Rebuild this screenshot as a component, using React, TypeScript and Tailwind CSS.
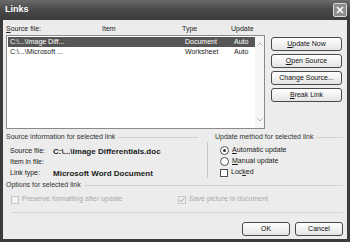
import React from "react";

const rows = [
  { file: "C:\\...\\Image Diff...", item: "", type: "Document", update: "Auto", selected: true },
  { file: "C:\\...\\Microsoft ...", item: "", type: "Worksheet", update: "Auto", selected: false },
];

function Btn({ children, className = "" }: { children: React.ReactNode; className?: string }) {
  return (
    <div
      className={`h-[14px] flex items-center justify-center rounded-[3px] border border-[#4a4a4a] bg-gradient-to-b from-white to-[#e4e4e4] text-[7px] text-[#111] ${className}`}
    >
      {children}
    </div>
  );
}

function Check({ checked = false, disabled = false }: { checked?: boolean; disabled?: boolean }) {
  return (
    <div
      className={`w-[8px] h-[8px] border flex items-center justify-center shrink-0 ${
        disabled ? "border-[#c4c4c4] bg-[#f2f2f2]" : "border-[#4d4d4d] bg-white"
      }`}
    >
      {checked && (
        <svg width="6" height="6" viewBox="0 0 6 6">
          <path d="M0.8 3 L2.3 4.5 L5.2 1.2" stroke={disabled ? "#bdbdbd" : "#333"} strokeWidth="1.2" fill="none" />
        </svg>
      )}
    </div>
  );
}

function Radio({ on = false }: { on?: boolean }) {
  return (
    <div className="w-[9px] h-[9px] rounded-full border border-[#4d4d4d] bg-white flex items-center justify-center shrink-0">
      {on && <div className="w-[3px] h-[3px] rounded-full bg-[#333]" />}
    </div>
  );
}

export default function App() {
  return (
    <div
      className="w-[350px] h-[242px] bg-[#3b3b3b] flex flex-col overflow-hidden text-[#1a1a1a]"
      style={{ fontFamily: '"Liberation Sans", Arial, sans-serif' }}
    >
      {/* Title bar */}
      <div className="h-[20px] flex items-center justify-between pl-[5px] pr-[3px] bg-gradient-to-b from-[#6a6a6a] via-[#484848] to-[#3b3b3b]">
        <span className="text-white text-[9px] font-bold">Links</span>
        <div className="w-[14px] h-[14px] rounded-[2px] border border-[#d8d8d8] bg-[#8c8c8c] flex items-center justify-center">
          <svg width="8" height="8" viewBox="0 0 8 8">
            <path d="M1 1 L7 7 M7 1 L1 7" stroke="white" strokeWidth="1.6" />
          </svg>
        </div>
      </div>

      {/* Body */}
      <div className="flex-1 mx-[3px] mb-[3px] bg-[#ececec] pl-[3px] pr-[4px] pt-[4px] flex flex-col text-[7px]">
        <div className="flex gap-[6px]">
          <div className="w-[259px] flex flex-col">
            <div className="h-[11px] grid grid-cols-[96px_80px_49px_1fr] items-center text-[#222]">
              <span><u>S</u>ource file:</span>
              <span>Item</span>
              <span>Type</span>
              <span>Update</span>
            </div>
            <div className="h-[94px] border border-[#8a8a8a] bg-white flex">
              <div className="flex-1 pt-[1px] pl-[1px]">
                {rows.map((r, i) => (
                  <div
                    key={i}
                    className={`h-[10px] grid grid-cols-[95px_80px_49px_1fr] items-center pl-[2px] ${
                      r.selected ? "bg-[#565656] text-white" : "text-[#1a1a1a]"
                    }`}
                  >
                    <span>{r.file}</span>
                    <span>{r.item}</span>
                    <span>{r.type}</span>
                    <span>{r.update}</span>
                  </div>
                ))}
              </div>
              <div className="w-[9px] bg-[#f6f6f6] flex flex-col justify-between items-center py-[6px]">
                <svg width="6" height="4" viewBox="0 0 6 4">
                  <path d="M0.5 3.5 L3 1 L5.5 3.5" stroke="#b5b5b5" strokeWidth="1" fill="none" />
                </svg>
                <svg width="6" height="4" viewBox="0 0 6 4">
                  <path d="M0.5 0.5 L3 3 L5.5 0.5" stroke="#b5b5b5" strokeWidth="1" fill="none" />
                </svg>
              </div>
            </div>
          </div>
          <div className="w-[71px] pt-[13px] flex flex-col gap-[3px]">
            <Btn><u>U</u>pdate Now</Btn>
            <Btn><u>O</u>pen Source</Btn>
            <Btn>Chan<u>g</u>e Source...</Btn>
            <Btn><u>B</u>reak Link</Btn>
          </div>
        </div>

        {/* Source info + update method */}
        <div className="mt-[3px] flex">
          <div className="w-[201px] flex flex-col">
            <div className="h-[10px] flex items-center gap-[3px] pr-[9px] text-[#333]">
              <span className="whitespace-nowrap">Source information for selected link</span>
              <div className="flex-1 h-px bg-[#d2d2d2]" />
            </div>
            <div className="mt-[4px] pl-[4px] flex flex-col">
              <div className="h-[11px] flex items-center">
                <span className="w-[43px]">Source file:</span>
                <span className="font-bold text-[8px] whitespace-nowrap">C:\...\Image Differentials.doc</span>
              </div>
              <div className="h-[11px] flex items-center">
                <span className="w-[43px]">Item in file:</span>
              </div>
              <div className="h-[11px] flex items-center">
                <span className="w-[43px]">Link type:</span>
                <span className="font-bold text-[8px] whitespace-nowrap">Microsoft Word Document</span>
              </div>
            </div>
          </div>
          <div className="flex-1 flex flex-col">
            <div className="h-[10px] flex items-center gap-[3px] pl-[8px] text-[#333]">
              <span className="whitespace-nowrap">Update method for selected link</span>
              <div className="flex-1 h-px bg-[#d2d2d2]" />
            </div>
            <div className="border-l border-[#c6c6c6] pl-[12px] pt-[3px] flex flex-col">
              <div className="h-[11px] flex items-center gap-[3px]">
                <Radio on />
                <span><u>A</u>utomatic update</span>
              </div>
              <div className="h-[11px] flex items-center gap-[3px]">
                <Radio />
                <span><u>M</u>anual update</span>
              </div>
              <div className="h-[11px] flex items-center gap-[3px]">
                <Check />
                <span>Loc<u>k</u>ed</span>
              </div>
            </div>
          </div>
        </div>

        {/* Options */}
        <div className="mt-[1px] h-[10px] flex items-center gap-[3px] text-[#333]">
          <span className="whitespace-nowrap">Options for selected link</span>
          <div className="flex-1 h-px bg-[#d2d2d2]" />
        </div>
        <div className="mt-[4px] h-[11px] grid grid-cols-[172px_1fr] items-center text-[#a9a9a9]">
          <div className="pl-[5px] flex items-center gap-[3px]">
            <Check disabled />
            <span>Preserve formatting after update</span>
          </div>
          <div className="flex items-center gap-[3px]">
            <Check checked disabled />
            <span>Save picture in document</span>
          </div>
        </div>
        <div className="mt-[7px] ml-[6px] h-px bg-[#d2d2d2]" />

        <div className="mt-[9px] flex justify-end gap-[5px]">
          <Btn className="w-[48px]">OK</Btn>
          <Btn className="w-[48px]">Cancel</Btn>
        </div>
      </div>
    </div>
  );
}
